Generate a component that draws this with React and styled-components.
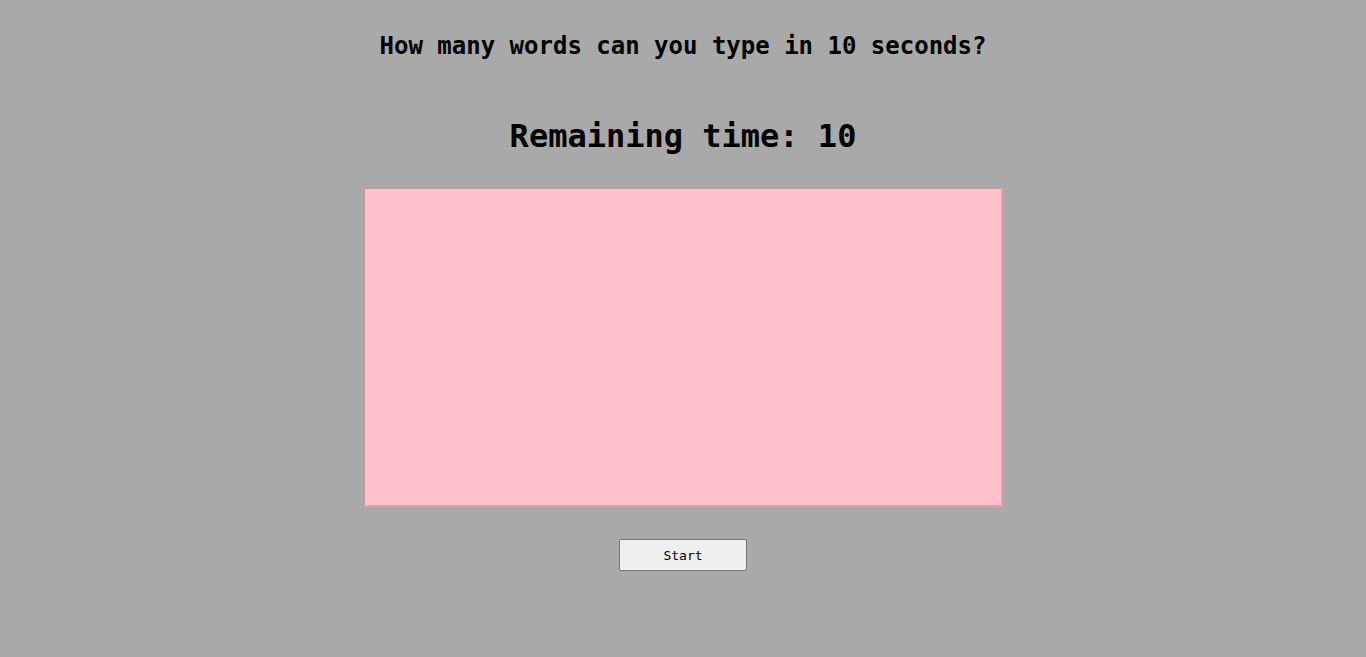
import React from "react";
import styled, { createGlobalStyle } from "styled-components";

const Global = createGlobalStyle`
  html, body { margin: 0; padding: 0; background: #a9a9a9; }
  body { font-family: "DejaVu Sans Mono", "Liberation Mono", monospace; color: #000; }
`;

const Page = styled.main`
  min-height: 657px;
  display: flex;
  flex-direction: column;
  align-items: center;
  padding-top: 31px;
  box-sizing: border-box;
`;

const Title = styled.h2`
  margin: 0;
  font-size: 24px;
  line-height: 30px;
  font-weight: bold;
`;

const Timer = styled.h1`
  margin: 55px 0 0;
  font-size: 32px;
  line-height: 40px;
  font-weight: bold;
`;

const TypingArea = styled.textarea`
  margin-top: 31px;
  width: 640px;
  height: 320px;
  box-sizing: border-box;
  background: #ffc0cb;
  border: 2px solid;
  border-color: #c39aa2 #d6a6af #d6a6af #c39aa2;
  resize: none;
  outline: none;
  padding: 2px;
  font-family: inherit;
`;

const StartButton = styled.button`
  margin-top: 32px;
  width: 128px;
  height: 32px;
  background: #efefef;
  border: 1px solid #767676;
  border-radius: 2px;
  font-family: "DejaVu Sans Mono", "Liberation Mono", monospace;
  font-size: 13px;
  color: #000;
  cursor: pointer;
`;

export default function App() {
  return (
    <>
      <Global />
      <Page>
        <Title>How many words can you type in 10 seconds?</Title>
        <Timer>Remaining time: 10</Timer>
        <TypingArea />
        <StartButton>Start</StartButton>
      </Page>
    </>
  );
}
